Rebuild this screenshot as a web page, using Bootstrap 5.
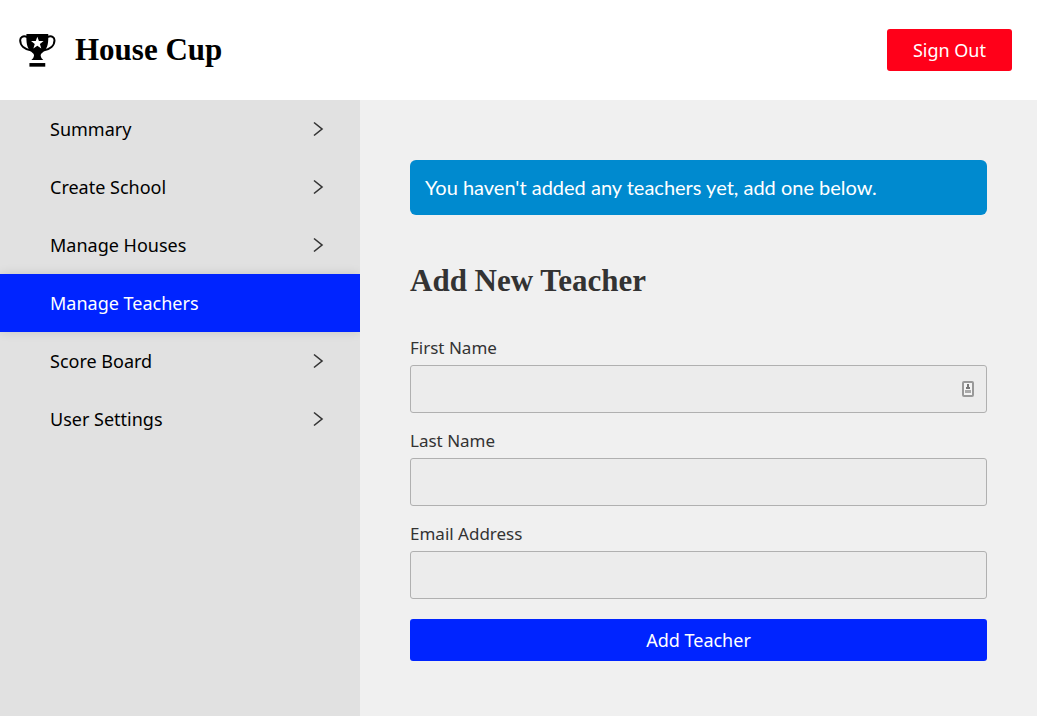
<!DOCTYPE html>
<html lang="en">
<head>
<meta charset="utf-8">
<meta name="viewport" content="width=device-width, initial-scale=1">
<title>House Cup</title>
<link href="https://cdn.jsdelivr.net/npm/bootstrap@5.3.0/dist/css/bootstrap.min.css" rel="stylesheet">
<style>
  body { font-family: "Noto Sans", sans-serif; font-size: 18px; line-height: 28px; color: #333; background: #f0f0f0; }
  .site-header { min-height: 100px; padding: 0 25px 0 19px; }
  .brand-name, .page-title { font-family: "Liberation Serif", serif; font-weight: 700; font-size: 31px; line-height: 42px; }
  .brand-link { gap: 19px; color: #000; }
  .action { font-size: 18px; line-height: 28px; padding: 7px 26px; border: 0; border-radius: 3px; --bs-btn-color: #fff; --bs-btn-hover-color: #fff; --bs-btn-active-color: #fff; }
  .action-red { --bs-btn-bg: #ff0019; --bs-btn-hover-bg: #e00016; --bs-btn-active-bg: #e00016; }
  .action-blue { --bs-btn-bg: #0024ff; --bs-btn-hover-bg: #001fdb; --bs-btn-active-bg: #001fdb; }
  .side-menu { flex: 0 0 360px; background: #e1e1e1; }
  .side-menu .nav-link { color: #000; padding: 15px 36px 15px 50px; }
  .side-menu .nav-link.active { color: #fff; background: #0024ff; box-shadow: 0 0 10px rgba(0, 0, 0, .12); }
  .side-menu ul { overflow: hidden; }
  .content { padding: 60px 50px; }
  .notice { font-family: Lato, sans-serif; font-size: 20px; line-height: 25px; color: #fff; background: #008acf; border: 0; border-radius: 6px; padding: 15px; margin-bottom: 45px; }
  .page-title { margin-bottom: 33px; }
  .field { margin-bottom: 20px; }
  .field .form-label { display: block; font-size: 17px; line-height: 25px; margin-bottom: 5px; }
  .field .form-control { height: 48px; background: #ececec; border-color: #b0b0b0; border-radius: 3px; }
  .field + .field { margin-top: -5px; }
  .autofill-mark { right: 12px; top: 16px; }
  @media (max-width: 767px) { .side-menu { flex-basis: auto; } }
</style>
</head>
<body class="d-flex flex-column min-vh-100">
<header class="site-header bg-white d-flex align-items-center justify-content-between">
  <a href="#" class="brand-link d-flex align-items-center text-decoration-none">
    <svg width="37" height="33" viewBox="57 72 111 100" aria-hidden="true">
      <path d="M79 72h66c1 24-1 43-13 52q-10 7-10 14 1 8 8 13H94q7-5 8-13 0-7-10-14C80 115 78 96 79 72z"/>
      <path d="M82 81C68 76 60 81 60 91c0 16 13 28 34 31M142 81c14-5 22 0 22 10 0 16-13 28-34 31" fill="none" stroke="#000" stroke-width="6"/>
      <path d="M88 160h48v11H88z"/>
      <path d="M112 80l4.800 13.500h14.200l-11.200 8.500 4.200 14-12-8.500-12 8.500 4.200-14L93 93.500h14.200z" fill="#fff"/>
    </svg>
    <span class="brand-name">House Cup</span>
  </a>
  <button type="button" class="btn action action-red">Sign Out</button>
</header>
<div class="d-flex flex-column flex-md-row flex-grow-1">
  <nav class="side-menu" aria-label="Main">
    <ul class="nav flex-column">
      <li><a class="nav-link d-flex align-items-center justify-content-between" href="#">Summary<svg width="12" height="16" viewBox="0 0 12 16" fill="none" stroke="#333" stroke-width="1.600" aria-hidden="true"><path d="M2 1.500 10 8 2 14.500"/></svg></a></li>
      <li><a class="nav-link d-flex align-items-center justify-content-between" href="#">Create School<svg width="12" height="16" viewBox="0 0 12 16" fill="none" stroke="#333" stroke-width="1.600" aria-hidden="true"><path d="M2 1.500 10 8 2 14.500"/></svg></a></li>
      <li><a class="nav-link d-flex align-items-center justify-content-between" href="#">Manage Houses<svg width="12" height="16" viewBox="0 0 12 16" fill="none" stroke="#333" stroke-width="1.600" aria-hidden="true"><path d="M2 1.500 10 8 2 14.500"/></svg></a></li>
      <li><a class="nav-link active" aria-current="page" href="#">Manage Teachers</a></li>
      <li><a class="nav-link d-flex align-items-center justify-content-between" href="#">Score Board<svg width="12" height="16" viewBox="0 0 12 16" fill="none" stroke="#333" stroke-width="1.600" aria-hidden="true"><path d="M2 1.500 10 8 2 14.500"/></svg></a></li>
      <li><a class="nav-link d-flex align-items-center justify-content-between" href="#">User Settings<svg width="12" height="16" viewBox="0 0 12 16" fill="none" stroke="#333" stroke-width="1.600" aria-hidden="true"><path d="M2 1.500 10 8 2 14.500"/></svg></a></li>
    </ul>
  </nav>
  <main class="content flex-grow-1">
    <div class="alert notice" role="alert">You haven't added any teachers yet, add one below.</div>
    <h1 class="page-title">Add New Teacher</h1>
    <form>
      <div class="field">
        <label class="form-label" for="first-name">First Name</label>
        <div class="position-relative">
          <input type="text" class="form-control" id="first-name">
          <svg class="autofill-mark position-absolute" width="14" height="16" viewBox="0 0 14 16" aria-hidden="true">
            <rect x="2" y="1" width="10" height="14" rx="1" fill="#f4f4f4" stroke="#999" stroke-width="2"/>
            <path d="M6 3h2v3h1v2H5V6h1z" fill="#777"/><path d="M4 9h6v3H4z" fill="#aaa"/>
          </svg>
        </div>
      </div>
      <div class="field">
        <label class="form-label" for="last-name">Last Name</label>
        <input type="text" class="form-control" id="last-name">
      </div>
      <div class="field">
        <label class="form-label" for="email">Email Address</label>
        <input type="email" class="form-control" id="email">
      </div>
      <button type="submit" class="btn action action-blue w-100">Add Teacher</button>
    </form>
  </main>
</div>
<script src="https://cdn.jsdelivr.net/npm/bootstrap@5.3.0/dist/js/bootstrap.bundle.min.js"></script>
</body>
</html>
